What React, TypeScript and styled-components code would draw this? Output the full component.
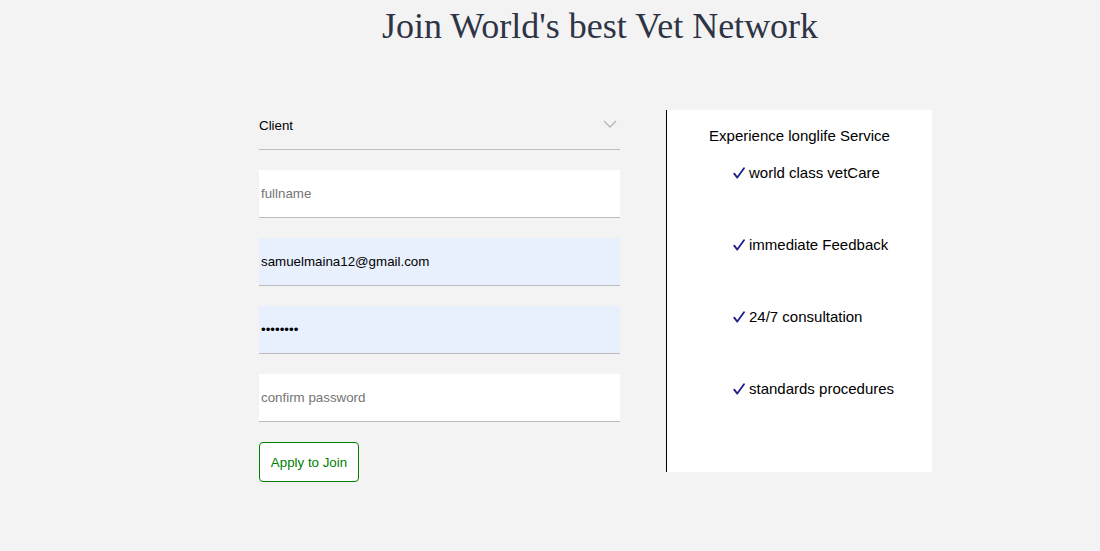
import styled, { createGlobalStyle } from 'styled-components'

const GlobalStyle = createGlobalStyle`
  html, body {
    margin: 0;
    min-height: 100%;
    background: #f3f3f3;
  }
  body {
    font-family: "Liberation Sans", Arial, sans-serif;
  }
`

const perks = ['world class vetCare', 'immediate Feedback', '24/7 consultation', 'standards procedures']

const App = () => {
  return (
    <Page>
      <GlobalStyle />
      <Title>Join World&apos;s best Vet Network</Title>

      <Row>
        <Form onSubmit={(e) => e.preventDefault()}>
          <SelectWrap>
            <Select defaultValue="client">
              <option value="client">Client</option>
              <option value="vet">Vet</option>
            </Select>
            <Chevron width="14" height="9" viewBox="0 0 14 9">
              <polyline points="1,1 7,7 13,1" fill="none" stroke="#b5b5b5" strokeWidth="1.3" />
            </Chevron>
          </SelectWrap>

          <Input type="text" placeholder="fullname" />
          <Input type="email" defaultValue="samuelmaina12@gmail.com" $filled />
          <Input type="password" defaultValue="samuel12" $filled />
          <Input type="password" placeholder="confirm password" />

          <Button type="submit">Apply to Join</Button>
        </Form>

        <Panel>
          <PanelHeading>Experience longlife Service</PanelHeading>
          <PerkList>
            {perks.map((perk) => (
              <Perk key={perk}>
                <Tick width="12" height="12" viewBox="0 0 12 12">
                  <path d="M1.2 6.6 L4.3 10.6 L11 1.2" fill="none" stroke="#1e1e8a" strokeWidth="1.8" strokeLinecap="round" strokeLinejoin="round" />
                </Tick>
                {perk}
              </Perk>
            ))}
          </PerkList>
        </Panel>
      </Row>
    </Page>
  )
}

const Page = styled.div`
  min-height: 551px;
  padding-left: 100px;
  box-sizing: border-box;
  display: flex;
  flex-direction: column;
`

const Title = styled.h1`
  margin: 5px 0 0;
  font-family: "Liberation Serif", "Times New Roman", serif;
  font-weight: 400;
  font-size: 36px;
  color: #2e3445;
  text-align: center;
`

const Row = styled.div`
  display: flex;
  justify-content: center;
  align-items: flex-start;
  gap: 46px;
  margin-top: 55px;
  padding-right: 9px;
`

const Form = styled.form`
  width: 361px;
  display: flex;
  flex-direction: column;
  align-items: flex-start;
  gap: 20px;
`

const SelectWrap = styled.div`
  position: relative;
  width: 100%;
`

const Select = styled.select`
  appearance: none;
  width: 100%;
  height: 48px;
  margin: 0;
  padding: 0;
  border: none;
  border-bottom: 1px solid #bcbcbc;
  background: transparent;
  font-family: "Liberation Sans", Arial, sans-serif;
  font-size: 13.333px;
  color: #000;
  outline: none;
`

const Chevron = styled.svg`
  position: absolute;
  right: 3px;
  top: 18px;
  pointer-events: none;
`

const Input = styled.input<{ $filled?: boolean }>`
  width: 100%;
  height: 48px;
  box-sizing: border-box;
  margin: 0;
  padding: 1px 2px;
  border: none;
  border-bottom: 1px solid #bcbcbc;
  background: ${(p) => (p.$filled ? '#e8f0fe' : '#fff')};
  font-family: "Liberation Sans", Arial, sans-serif;
  font-size: 13.333px;
  color: #000;
  outline: none;

  &::placeholder {
    color: #757575;
  }
`

const Button = styled.button`
  width: 100px;
  height: 40px;
  padding: 0;
  border: 1px solid #008000;
  border-radius: 4px;
  background: #fff;
  color: #008000;
  font-family: "Liberation Sans", Arial, sans-serif;
  font-size: 13.333px;
  cursor: pointer;
`

const Panel = styled.div`
  width: 266px;
  height: 362px;
  margin-top: 8px;
  box-sizing: border-box;
  background: #fff;
  border-left: 1px solid #000;
  padding-top: 16px;
  display: flex;
  flex-direction: column;
  align-items: center;
`

const PanelHeading = styled.p`
  margin: 0;
  font-size: 15px;
  line-height: 20px;
  color: #000;
`

const PerkList = styled.ul`
  list-style: none;
  align-self: stretch;
  margin: 17px 0 0;
  padding-left: 66px;
  display: flex;
  flex-direction: column;
  gap: 52px;
`

const Perk = styled.li`
  display: flex;
  align-items: center;
  gap: 4px;
  font-size: 15px;
  line-height: 20px;
  color: #000;
`

const Tick = styled.svg`
  flex-shrink: 0;
  margin-top: -1px;
`

export default App
